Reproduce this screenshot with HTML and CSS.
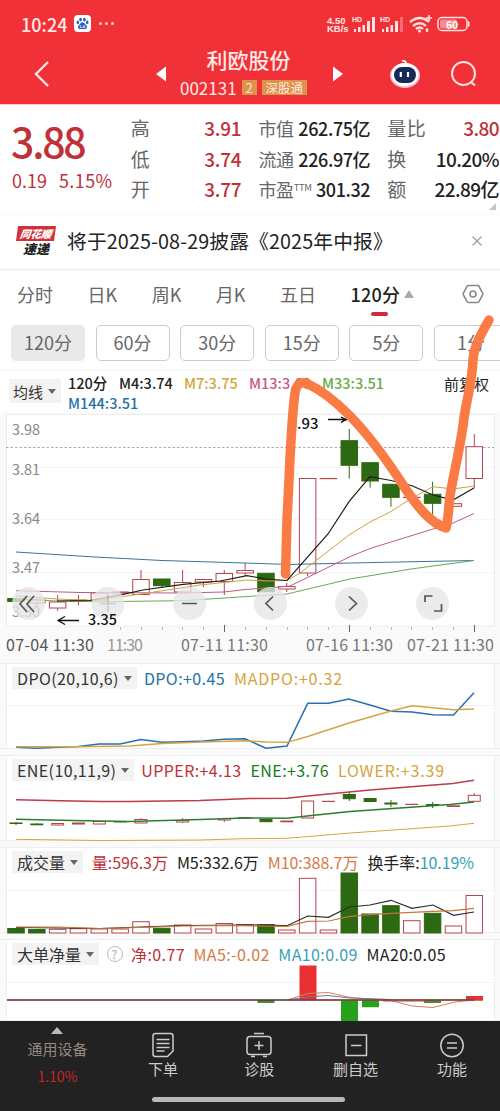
FILE: index.html
```html
<!DOCTYPE html>
<html lang="zh-CN">
<head>
    <meta charset="UTF-8">
    <meta name="viewport" content="width=device-width, initial-scale=1.0">
    <title>利欧股份 002131</title>
    <link rel="stylesheet" href="styles.css">
</head>
<body>
    <!-- 顶部 -->
    <header class="header">
        <div class="status">
            <span class="time">10:24</span>
            <svg class="baidu" width="17" height="17" viewBox="0 0 17 17">
                <rect width="17" height="17" rx="4" fill="#fff"/>
                <g fill="#2c62c4"><ellipse cx="3.8" cy="7.4" rx="1.3" ry="1.8"/><ellipse cx="6.6" cy="4.6" rx="1.4" ry="1.9"/><ellipse cx="10.4" cy="4.6" rx="1.4" ry="1.9"/><ellipse cx="13.2" cy="7.4" rx="1.3" ry="1.8"/><path d="M8.5 7.3c1.8 0 2.3 1.8 3.5 2.8 1.8 1.5 1 4-1 4H6c-2 0-2.8-2.5-1-4 1.200-1 1.700-2.800 3.500-2.800z"/></g>
                <path d="M6.300 10.500v2h1.500M9.200 10.500v2h1.500v-2" stroke="#fff" stroke-width=".8" fill="none"/>
            </svg>
            <span class="dots"><i></i><i></i><i></i></span>
            <span class="speed"><span>4.50</span><span>KB/s</span></span>
            <svg class="signals" width="145" height="20" viewBox="352 14 145 20" fill="#ffe3e0">
                <text x="352" y="22" class="hd">HD</text>
                <path d="M354 29h2v3h-2zM358 27h2.500v5h-2.500zM362.500 25h2.500v7h-2.500zM367 21h3v11h-3zM372 17h3v15h-3z"/>
                <text x="380" y="22" class="hd">HD</text>
                <path d="M382 29h2v3h-2zM386 27h2.500v5h-2.500zM390.500 25h2.500v7h-2.500zM395 21h3v11h-3z"/>
                <path d="M400 17h3v15h-3z" opacity=".35"/>
                <g fill="none" stroke="#ffe3e0" stroke-width="2.300"><path d="M410 22q10-8 19 0M413 26q7-5.500 13 0M416 29q4-3 7 0"/><path d="M426 18h6M429 15v6" stroke-width="1.600"/></g>
                <circle cx="419.500" cy="31" r="1.500"/><path d="M425 30l2-2 2 2h-1v2h-2v-2z"/>
                <rect x="438" y="17.500" width="29" height="13" rx="4" fill="none" stroke="#ffe3e0" stroke-width="1.500"/>
                <rect x="440" y="19.500" width="17" height="9" rx="2" opacity=".5"/>
                <path d="M468 21.500h1.500v5H468z"/>
                <text x="452" y="28.500" class="battery">60</text>
            </svg>
        </div>
        <div class="titlebar">
            <svg class="back" width="18" height="28" viewBox="0 0 18 28"><path d="M15 2L3 14l12 12" fill="none" stroke="#ffe3e0" stroke-width="2.400"/></svg>
            <svg class="prev" width="12" height="16" viewBox="0 0 12 16"><path d="M11 0.500v15L1 8z" fill="#fff"/></svg>
            <div class="stock">
                <h1>利欧股份</h1>
                <p><span>002131</span><em>2</em><em>深股通</em></p>
            </div>
            <svg class="next" width="12" height="16" viewBox="0 0 12 16"><path d="M0 0.500v15L10 8z" fill="#fff"/></svg>
            <svg class="robot" width="32" height="30" viewBox="0 0 32 30">
                <path d="M13 2q4-1 4 3" fill="none" stroke="#fff" stroke-width="1.800"/>
                <ellipse cx="16" cy="16.500" rx="15" ry="12.500" fill="#efc3da"/>
                <ellipse cx="16" cy="15.500" rx="13.500" ry="11.500" fill="#fff"/>
                <rect x="5" y="8" width="22" height="16" rx="8" fill="#172a55"/>
                <path d="M11.800 13v5M19 13v5" stroke="#fff" stroke-width="2.200"/>
            </svg>
            <svg class="search" width="28" height="28" viewBox="0 0 28 28" fill="none" stroke="#ffe3e0" stroke-width="2"><circle cx="13.500" cy="13.500" r="11.500"/><path d="M21 22l4 3.500"/></svg>
        </div>
    </header>

    <!-- 行情 -->
    <section class="quote">
        <div class="price">
            <strong>3.88</strong>
            <p><span>0.19</span><span>5.15%</span></p>
        </div>
        <dl class="stats ohl">
            <div><dt>高</dt><dd class="red">3.91</dd></div>
            <div><dt>低</dt><dd class="red">3.74</dd></div>
            <div><dt>开</dt><dd class="red">3.77</dd></div>
        </dl>
        <dl class="stats cap">
            <div><dt>市值</dt><dd>262.75亿</dd></div>
            <div><dt>流通</dt><dd>226.97亿</dd></div>
            <div><dt>市盈<sup>TTM</sup></dt><dd>301.32</dd></div>
        </dl>
        <dl class="stats turnover">
            <div><dt>量比</dt><dd class="red">3.80</dd></div>
            <div><dt>换</dt><dd>10.20%</dd></div>
            <div><dt>额</dt><dd>22.89亿</dd></div>
        </dl>
        <i class="corner"></i>
    </section>

    <section class="news">
        <div class="badge"><b>同花顺</b><span>速递</span></div>
        <p>将于2025-08-29披露《2025年中报》</p>
        <svg width="10" height="10" viewBox="0 0 10 10"><path d="M.5.5l9 9M9.500.5l-9 9" stroke="#999" stroke-width="1.100"/></svg>
    </section>

    <!-- 周期 -->
    <nav class="tabs">
        <span>分时</span><span>日K</span><span>周K</span><span>月K</span><span>五日</span>
        <span class="active">120分</span>
        <i class="up"></i>
        <svg width="22" height="20" viewBox="0 0 22 20" fill="none" stroke="#888" stroke-width="1.600"><path d="M6.500 1.500h9q1 0 1.500 1l3.600 6.500q.5 1 0 2L17 17.500q-.5 1-1.500 1h-9q-1 0-1.500-1L1.400 11q-.5-1 0-2L5 2.500q.5-1 1.500-1z"/><circle cx="11" cy="10" r="3"/></svg>
    </nav>
    <div class="periods">
        <button class="on">120分</button><button>60分</button><button>30分</button><button>15分</button><button>5分</button><button>1分</button>
    </div>

    <div class="ma">
        <span class="chip">均线<i></i></span>
        <div class="values">
            <span class="c1">120分</span><span class="c2">M4:3.74</span><span class="c3 gold">M7:3.75</span><span class="c4 pink">M13:3.60</span><span class="green">M33:3.51</span>
            <br><span class="blue">M144:3.51</span>
        </div>
        <span class="adjust">前复权</span>
    </div>

    <!-- K线 -->
    <svg class="chart" width="500" height="248" viewBox="0 412 500 248">
        <rect x="0" y="412" width="500" height="248" fill="#fafafa"/>
        <path d="M6.500 414.500h488V626h-488z" fill="#fff" stroke="#ececec"/>
        <path d="M6 467.500h488M6 519.500h488M6 572.500h488" stroke="#f4f4f4"/>
        <path d="M6 447.500h488" stroke="#aaa" stroke-dasharray="2.500 2"/>
        <g class="ylabel">
            <text x="12" y="434.500" textLength="28">3.98</text>
            <text x="12" y="475" textLength="28">3.81</text>
            <text x="12" y="524" textLength="28">3.64</text>
            <text x="12" y="572.500" textLength="28">3.47</text>
            <text x="12" y="617" textLength="28">3.30</text>
        </g>
        <g id="candles"></g>
        <g class="line">
            <path stroke="#3d7396" d="M16 552L95 557L162 560.500L245 563L290 564.500L350 563L474 560.500"/>
            <path stroke="#6fa853" d="M16 599L57 601L100 601.700L183 600.700L247 596.500L287 594L350 579L411 569L474 560.500"/>
            <path stroke="#bd5b88" d="M16 590.700L80 592.500L183 593L224 592L245 589.500L266 588L290 586L350 556.700L370 548.500L433 529L453 523L474 513.500"/>
            <path stroke="#d1a040" d="M16 596L57 599L93 600.500L141 594L200 585L247 580L266 581L287 580.500L300 573L349 535L370 522L391 511.500L412 498L433 486.700L453 489L474 486"/>
            <path stroke="#1c1c1c" stroke-width="1.200" d="M57 601L90 600.500L123 594.300L143 590L183 584.300L220 581L247 575.700L266 579L287 580.500L328 534L349 501.700L370 476.700L391 480.500L412 485.700L433 495L453 500L474 488"/>
        </g>
        <g class="tools">
            <circle cx="28.500" cy="603.500" r="16.500"/><circle cx="108" cy="603.500" r="16.500"/><circle cx="189.500" cy="603.500" r="16.500"/>
            <circle cx="270.500" cy="603.500" r="16.500"/><circle cx="351.500" cy="603.500" r="16.500"/><circle cx="432.500" cy="603.500" r="16.500"/>
            <path d="M27 596l-7 8 7 8M34 596l-7 8 7 8M182 603.500h15M273 596.500l-7 7 7 7M349 596.500l7.500 7-7.500 7M425 602v-6h7.500M441.500 604v7h-7.500"/>
            <path d="M100 603.500h16M108 595.500v16" opacity=".2"/>
        </g>
        <g class="mark">
            <text x="288.500" y="428.500" textLength="30" lengthAdjust="spacingAndGlyphs">3.93</text>
            <text x="88" y="624.500" textLength="29" lengthAdjust="spacingAndGlyphs">3.35</text>
            <path d="M328 419.500h19M341 417q3 2 6 2.500q-3 .5-6 3M79 620.500H58M65 616.500l-7 4 7 4"/>
        </g>
        <path d="M120.500 627v3M141.500 627v3M162.500 627v3M182.500 627v3M203.500 627v3M245.500 627v3M266.500 627v3M287.500 627v3M307.500 627v3M328.500 627v3M370.500 627v3M391.500 627v3M411.500 627v3M432.500 627v3M453.500 627v3" stroke="#bbb"/>
        <path d="M224.500 625v7M349.500 625v7M474.500 625v7" stroke="#666"/>
        <g class="date">
            <text x="6" y="651" textLength="88" fill="#555">07-04 11:30</text>
            <text x="107" y="651" textLength="36" opacity=".75">11:30</text>
            <text x="181" y="651" textLength="87">07-11 11:30</text>
            <text x="306" y="651" textLength="87">07-16 11:30</text>
            <text x="407" y="651" textLength="87">07-21 11:30</text>
        </g>
    </svg>

    <!-- 指标 -->
    <section class="panel dpo">
        <div class="legend"><span class="chip">DPO(20,10,6)<i></i></span><span class="blue">DPO:+0.45</span><span class="gold">MADPO:+0.32</span></div>
        <svg width="500" height="59" viewBox="0 690 500 59">
            <path d="M7 705.500h488" stroke="#f3f3f3"/>
            <g class="line">
                <path stroke="#2a6fae" stroke-width="1.500" d="M16 747.300L37 748.300L58 747.300L78.500 746.500L99 744L120 744L141 739.500L162 742.300L183 741.700L203.500 741L224 739.300L245 738.700L266 748.300L287 746L307.700 703.300L328.500 703.300L349 699L370 705L391 711.300L412 712L433 714.700L453.500 715L474 692.700"/>
                <path stroke="#d3a545" stroke-width="1.400" d="M16 746.700L78 746.700L130 746L162 743.500L203 742L245 740.700L266 742L287 742.300L307.700 736.500L349 723L391 711L412 705.700L433 707.700L453 709.700L474 709"/>
            </g>
        </svg>
    </section>
    <section class="panel ene">
        <div class="legend"><span class="chip">ENE(10,11,9)<i></i></span><span class="red">UPPER:+4.13</span><span class="darkgreen">ENE:+3.76</span><span class="gold">LOWER:+3.39</span></div>
        <svg width="500" height="59" viewBox="0 782 500 59">
            <g id="ene-candles"></g>
            <g class="line">
                <path stroke="#bd3b4c" stroke-width="1.400" d="M16 799.700L60 800.700L100 801.500L130 801.500L200 800.500L250 798.500L287 798.300L307.700 796L370 790L453 783.500L474 780.300"/>
                <path stroke="#2b7d33" stroke-width="1.500" d="M16 819.300L60 820.300L100 821L130 821.500L200 819.500L245 818L287 818.300L307 816L350 811.500L400 808L450 804.500L474 802"/>
                <path stroke="#d3a545" d="M16 839.300L100 840.500L200 840L245 838.700L287 838.300L350 833L450 826L474 823.300"/>
            </g>
        </svg>
    </section>
    <section class="panel vol">
        <div class="legend"><span class="chip">成交量<i></i></span><span class="red">量:596.3万</span><span>M5:332.6万</span><span class="orange">M10:388.7万</span><span>换手率:<b class="cyan">10.19%</b></span></div>
        <svg width="500" height="59" viewBox="0 874 500 59">
            <path d="M7 890.500h488" stroke="#f3f3f3"/>
            <g id="volume"></g>
            <g class="line">
                <path stroke="#2b2b2b" stroke-width="1.200" d="M16 927.500L100 928.500L141 927L183 925.500L245 925L287 925.700L307.700 916L328.500 917.300L349 907L370 905L391 900.300L412 908.300L433 905L453.500 915.300L474 912"/>
                <path stroke="#c9743c" stroke-width="1.200" d="M16 927L58 927L100 928.500L141 927.500L183 926L224 925.500L287 926.300L307.700 921.300L328.500 921L349 916.700L370 914.700L391 913.300L412 912.300L433 911.300L453 910.700L474 908.300"/>
            </g>
        </svg>
    </section>
    <section class="panel net">
        <div class="legend"><span class="chip">大单净量<i></i></span><span class="help">?</span><span class="red">净:0.77</span><span class="orange">MA5:-0.02</span><span class="cyan">MA10:0.09</span><span>MA20:0.05</span></div>
        <svg width="500" height="54" viewBox="0 966 500 54">
            <path d="M7 982.500h488" stroke="#f3f3f3"/>
            <path d="M299.500 965.500h17V1000h-17zM466 996h17v4.500h-17z" fill="#e93133"/>
            <path d="M341 1000h17v22h-17zM362 1000h17v7.300h-17z" fill="#26a11c"/>
            <path d="M257.500 1000h17v3h-17zM424 1000h17v3h-17z" fill="#548637"/>
            <g class="line">
                <path stroke="#d0825a" d="M287 1000L307.700 993.500L328.500 992.500L350 997.500L391 1000.500L412 1006L433 1007.500L455 1002L474 1000"/>
                <path stroke="#74749c" d="M287 1000L307 997L328 995.500L350 998L391 999.500"/>
                <path stroke="#4d3434" stroke-width="1.700" d="M7 1000H474"/>
                <path stroke="#a94b43" d="M7 1000.500H16M383 1001H425M287 1000H483"/>
            </g>
        </svg>
    </section>

    <footer class="bottom">
        <div class="sector"><i></i><span>通用设备</span><b>1.10%</b></div>
        <div class="item">
            <svg width="24" height="26" viewBox="0 0 24 26"><path d="M4.500 1.500h15q2.500 0 2.500 2.500v15l-5.500 5.500h-12Q2 24.500 2 22V4q0-2.500 2.500-2.500zM5.500 7.500h13M5.500 11.500h13M5.500 15.500h13M5.500 19h8"/></svg>
            <span>下单</span>
        </div>
        <div class="item">
            <svg width="26" height="26" viewBox="0 0 26 26"><path d="M4 4.500h18q3 0 3 3v12q0 3-3 3H4q-3 0-3-3v-12q0-3 3-3zM8 1.500h10M5 24.500h4M17 24.500h4M8.500 13.500h9M13 9v9"/></svg>
            <span>诊股</span>
        </div>
        <div class="item">
            <svg width="24" height="26" viewBox="0 0 24 26"><path d="M2 3h20.500v20.500H2zM7 13.500h10.500"/></svg>
            <span>删自选</span>
        </div>
        <div class="item">
            <svg width="26" height="26" viewBox="0 0 26 26"><circle cx="13" cy="13.500" r="11.200"/><path d="M8 11h10M8 16h10"/></svg>
            <span>功能</span>
        </div>
        <i class="home"></i>
    </footer>

    <!-- 手绘线 -->
    <svg class="drawing" width="500" height="1111" viewBox="0 0 500 1111">
        <path d="M489 320C481 334 474 346 473 360C472 385 466 400 463.500 422C460 450 452 480 449.500 500Q448 520 446 528C430 523 417 506 405 488C387 460 367 433 349 415C331 397 319 389 307 383.500Q297 380 295 393C291 420 290 465 287 520L285.500 574"/>
    </svg>

    <script>
        const GREEN = '#2d6812';
        const RED = '#b5444c';
        const STEP = 20.83;

        // [开/收上沿, 下沿, 最高, 最低, 涨?]
        const candles = [
            [598.5, 601.5, 598.5, 601.5, 0], [600, 603, 597, 606, 1], [602, 608, 595, 611, 1], [600, 601, 595, 605, 1],
            [593, 600, 593, 600, 1], [592, 593, 592, 593, 1], [579.5, 594.5, 570, 594.5, 1], [579, 585.7, 579, 588, 0],
            [582.5, 592, 570, 592, 1], [579.5, 582, 579, 587, 1], [573.5, 581.5, 570, 595, 1], [570.5, 573, 563, 576, 1],
            [573.3, 591.7, 573, 591.7, 0], [586.5, 589, 583, 592, 1], [478.5, 573, 478.5, 576, 1], [478.5, 478.7, 478.5, 478.5, 1],
            [440.7, 465.3, 429, 478.5, 0], [462.7, 481, 462, 487.7, 0], [484.3, 497.3, 484, 506.7, 0], [497.3, 497.5, 497, 497, 1],
            [494.3, 503.3, 481.7, 514.5, 0], [503.7, 506.3, 500, 506.5, 1], [446.7, 478.5, 434, 488, 1]
        ];
        const ene = [
            [823, 823.5, 822, 825, 0], [824, 824.8, 823, 825, 0], [823.5, 825, 823, 825, 1], [823, 824, 823, 824, 1],
            [821.5, 824, 821, 824, 1], [821.5, 822, 821, 822, 0], [819.5, 823, 818, 823, 1], null,
            [820.5, 822, 818, 823, 1], null, [818.5, 820, 818, 822, 1], [817.5, 818, 817, 818, 1],
            [819.5, 821.7, 819, 822, 0], [821, 821.8, 821, 822, 1], [801, 818, 801, 818, 1], [801.3, 801.5, 801, 801, 1],
            [794.5, 798.7, 792, 801, 0], [798.5, 801.5, 798, 802, 0], [803, 804, 800, 807, 0], [804.3, 804.5, 804, 804, 1],
            [804.5, 805.5, 802, 808, 0], [805.8, 806.5, 806, 806, 1], [795.3, 801.3, 793, 801, 1]
        ];
        // [柱顶, 涨?]
        const volume = [
            [928.5, 0], [929.5, 0], [929.3, 1], [928.7, 1], [929, 1], [929, 1], [921.7, 1], [928.3, 0], [925, 1], [929, 1], [923.5, 1], [924.5, 1],
            [924.5, 0], [930, 1], [878.3, 1], [930, 1], [873, 0], [914, 0], [905.7, 0], [920.7, 1], [913.3, 0], [926, 1], [895.5, 1]
        ];

        function bar(x, top, bottom, width, up) {
            return `<rect x="${x - width / 2}" y="${top}" width="${width}" height="${bottom - top}" fill="${up ? '#fff' : GREEN}" stroke="${up ? RED : GREEN}"/>`;
        }

        function drawCandles(id, data, width) {
            document.getElementById(id).innerHTML = data.map((c, i) => {
                if (!c) return '';
                const x = 16 + i * STEP;
                return `<path d="M${x} ${c[2]}V${c[3]}" stroke="${c[4] ? RED : GREEN}"/>` + bar(x, c[0], c[1], width, c[4]);
            }).join('');
        }

        drawCandles('candles', candles, 16.5);
        drawCandles('ene-candles', ene, 12);
        document.getElementById('volume').innerHTML = volume.map((v, i) => bar(16 + i * STEP, v[0], 933, 16.5, v[1])).join('');
    </script>
</body>
</html>
```
FILE: styles.css
```css
* {
    box-sizing: border-box;
}

body {
    margin: 0;
    width: 500px;
    height: 1111px;
    position: relative;
    overflow: hidden;
    background: #fafafa;
    color: #222;
    font-family: "Noto Sans CJK SC", sans-serif;
}

h1, p, dl, dd {
    margin: 0;
}

svg {
    display: block;
    flex: none;
    overflow: visible;
}

em, i {
    font-style: normal;
}

.red { color: #bf3039 !important; }
.gold { color: #d5a33c; }
.pink { color: #c65983; }
.green { color: #6aaa4b; }
.darkgreen { color: #167a20; }
.blue { color: #2470a8; }
.orange { color: #d77a45; }
.cyan { color: #399fb9; }

/* 顶部 */
.header {
    height: 104px;
    background: #f13138;
    color: #ffe9e6;
}

.status {
    height: 47px;
    padding: 0 0 0 21px;
    display: flex;
    align-items: center;
}

.time {
    width: 53px;
    font-size: 18px;
    font-weight: 500;
}

.dots {
    display: flex;
    gap: 3px;
    margin-left: 8px;
    width: 228px;
}

.dots i {
    width: 3px;
    height: 3px;
    border-radius: 50%;
    background: #ffc9c4;
}

.speed {
    width: 25px;
    margin-top: 1px;
    font: bold 9.5px/9px "Liberation Sans", sans-serif;
}

.speed span {
    display: block;
    height: 8.500px;
}

.hd {
    font: bold 7px "Liberation Sans", sans-serif;
}

.battery {
    font: bold 11px "Liberation Sans", sans-serif;
    text-anchor: middle;
    fill: #fff;
}

.titlebar {
    display: flex;
    align-items: center;
    height: 54px;
    padding-left: 33px;
}

.prev { margin-left: 104px; }
.next { margin-left: 20px; }
.robot { margin-left: 44px; }
.search { margin-left: 29px; }

.stock {
    width: 144px;
    margin: -1px 0 0 2px;
    padding-left: 11px;
}

.stock h1 {
    text-align: center;
    margin-left: 4px;
    font-size: 21px;
    font-weight: 500;
    line-height: 28px;
}

.stock p {
    display: flex;
    align-items: center;
    gap: 5px;
    line-height: 29px;
    font-size: 17px;
    white-space: nowrap;
}

.stock em {
    padding: 0 4px;
    background: #dd9348;
    font-size: 12.5px;
    line-height: 15px;
}

/* 行情 */
.quote {
    position: relative;
    display: flex;
    height: 110px;
    padding: 8px 1px 0 12px;
    border-top: 1px solid #f9c9ca;
    background: #fff;
    color: #bf3039;
}

.price {
    width: 119px;
}

.price strong {
    display: block;
    height: 55px;
    margin-left: -1px;
    font-size: 41px;
    font-weight: 500;
    line-height: 55px;
    letter-spacing: -2.2px;
}

.price p {
    display: flex;
    gap: 12px;
    font-size: 18px;
    line-height: 24px;
}

.price p span:last-child {
    letter-spacing: 0.4px;
}

.stats {
    font-size: 19px;
    line-height: 30.700px;
    color: #222;
}

.stats div {
    display: flex;
    justify-content: space-between;
    height: 30.700px;
    white-space: nowrap;
}

.stats dt {
    color: #666;
}

.stats dd {
    font-weight: 500;
}

.ohl {
    width: 111px;
    letter-spacing: -0.2px;
}

.cap {
    width: 112px;
    margin-left: 17px;
    font-size: 18px;
    letter-spacing: -0.4px;
}

.turnover {
    width: 112px;
    margin-left: 17px;
    letter-spacing: -0.6px;
}

.turnover dt {
    letter-spacing: 0.5px;
}

.stats sup {
    font-size: 9.5px;
    line-height: 0;
    vertical-align: 6px;
}

.corner {
    position: absolute;
    right: 4px;
    bottom: 4px;
    border-left: 7px solid transparent;
    border-bottom: 7px solid #c4c4c4;
}

.news {
    display: flex;
    align-items: center;
    height: 54px;
    padding: 0 0 2px 17px;
    background: #fff;
    border-top: 1px solid #f8f8f8;
}

.news p {
    width: 405px;
    font-size: 19.8px;
    letter-spacing: 0.1px;
    white-space: nowrap;
}

.badge {
    width: 50px;
    font-size: 13px;
    line-height: 15px;
    font-style: italic;
    font-weight: 900;
}

.badge b, .badge span {
    display: block;
    width: 38px;
    height: 15px;
    text-align: center;
}

.badge b {
    font-weight: 900;
    font-size: 10.5px;
    background: #d23237;
    color: #fff;
    transform: skewX(-8deg);
}

/* 周期 */
.tabs {
    display: flex;
    align-items: center;
    gap: 34.500px;
    height: 52px;
    padding: 0 0 3px 17px;
    border-top: 3px solid #f4f4f4;
    background: #fff;
    color: #666;
    font-size: 18px;
}

.tabs .active {
    position: relative;
    color: #222;
    font-weight: 500;
    letter-spacing: 0.3px;
}

.tabs .active::after {
    content: "";
    position: absolute;
    left: 21px;
    bottom: -9px;
    width: 17px;
    height: 4px;
    border-radius: 2px;
    background: #d12b3c;
}

.up {
    margin-left: -31px;
    border: 5px solid transparent;
    border-top: 0;
    border-bottom: 8px solid #aaa;
}

.tabs svg {
    margin-left: 14px;
}

.periods {
    display: flex;
    gap: 10.600px;
    height: 50px;
    padding: 5px 0 0 11px;
    overflow: hidden;
    background: #fff;
}

.periods button {
    flex: none;
    width: 74px;
    height: 36px;
    padding: 0 0 2px;
    border: 1px solid #ccc;
    border-radius: 5px;
    background: #fff;
    color: #666;
    font: 18px "Noto Sans CJK SC", sans-serif;
}

.periods .on {
    border-color: #e9e9e9;
    background: #e9e9e9;
}

/* 均线 */
.chip {
    display: flex;
    align-items: center;
    background: #f3f3f3;
    color: #333;
}

.chip i {
    margin-left: 5px;
    border: 4px solid transparent;
    border-bottom: 0;
    border-top: 5px solid #666;
}

.ma {
    display: flex;
    height: 42px;
    padding-left: 9px;
    border-top: 1px solid #f4f4f4;
    background: #fff;
    font-size: 14.500px;
    font-weight: 500;
    white-space: nowrap;
}

.ma .chip {
    width: 52px;
    height: 24px;
    margin-top: 8px;
    padding-left: 4px;
    font-size: 15px;
    font-weight: 400;
}

.values {
    width: 376px;
    margin-left: 7px;
    line-height: 20px;
    margin-top: 2px;
}

.values span {
    display: inline-block;
}

.values .c1 { width: 51px; }
.values .c2, .values .c3 { width: 65px; }
.values .c4 { width: 73px; }

.adjust {
    line-height: 25px;
    font-size: 15px;
    font-weight: 400;
}

/* K线 */
.line path {
    fill: none;
}

.ylabel {
    font-size: 14.500px;
    fill: #888;
}

.mark {
    font-size: 14px;
    font-weight: 500;
    fill: #111;
}

.mark path {
    fill: none;
    stroke: #111;
    stroke-width: 1.300;
}

.tools circle {
    fill: rgba(230, 230, 230, 0.78);
}

.tools path {
    fill: none;
    stroke: #555;
    stroke-width: 1.700;
}

.date {
    font-size: 16px;
    fill: #777;
}

/* 指标 */
.panel {
    height: 86px;
    margin-bottom: 6px;
    background: #fff;
    box-shadow: inset 0 1px #eee, inset 0 -1px #eee, inset 6px 0 #fafafa, inset -5px 0 #fafafa, inset 7px 0 #eee, inset -6px 0 #eee;
}

.legend {
    display: flex;
    align-items: center;
    gap: 9px;
    height: 27px;
    padding: 3px 0 0 12px;
    font-size: 16px;
    white-space: nowrap;
}

.legend .chip {
    height: 22px;
    margin-right: -2px;
    padding: 0 5px;
}

.legend b {
    font-weight: 400;
}

.dpo {
    margin-top: 3px;
    height: 86px;
}

.dpo .legend,
.ene .legend {
    letter-spacing: 0.4px;
}

.dpo .legend .gold,
.ene .legend .gold {
    letter-spacing: 0.8px;
}

.vol .legend .chip {
    margin-right: 0;
}

.vol .legend {
    letter-spacing: -0.05px;
}

.net {
    height: 82px;
    margin: 0;
}

.net .legend {
    gap: 8.500px;
    letter-spacing: 0.4px;
}

.net .legend .chip {
    margin-right: -1px;
    letter-spacing: 0;
}

.help {
    width: 16px;
    height: 16px;
    border: 1.500px solid #bbb;
    border-radius: 50%;
    color: #aaa;
    font-size: 12px;
    line-height: 13px;
    text-align: center;
}

/* 底部 */
.bottom {
    position: absolute;
    left: 0;
    top: 1021px;
    display: flex;
    width: 500px;
    height: 90px;
    background: #222;
    color: #ccc;
    font-size: 15px;
    text-align: center;
}

.sector {
    display: flex;
    flex-direction: column;
    align-items: center;
    width: 115px;
    color: #918880;
}

.sector i {
    margin-top: 6px;
    border: 6px solid transparent;
    border-top: 0;
    border-bottom: 7px solid #bbb;
}

.sector span {
    line-height: 30px;
}

.sector b {
    color: #c72222;
    font-size: 14px;
    font-weight: 400;
    line-height: 25px;
}

.item {
    display: flex;
    flex-direction: column;
    align-items: center;
    width: 96.300px;
    padding-top: 11px;
}

.item span {
    line-height: 21px;
}

.item svg {
    fill: none;
    stroke: #ccc;
    stroke-width: 1.500;
}

.home {
    position: absolute;
    left: 152px;
    bottom: 9px;
    width: 193px;
    height: 5px;
    border-radius: 3px;
    background: #b8b8b8;
}

/* 手绘线 */
.drawing {
    position: absolute;
    left: 0;
    top: 0;
    pointer-events: none;
}

.drawing path {
    fill: none;
    stroke: #fb7b45;
    stroke-width: 9.500;
    stroke-linecap: round;
    stroke-linejoin: round;
}
```
